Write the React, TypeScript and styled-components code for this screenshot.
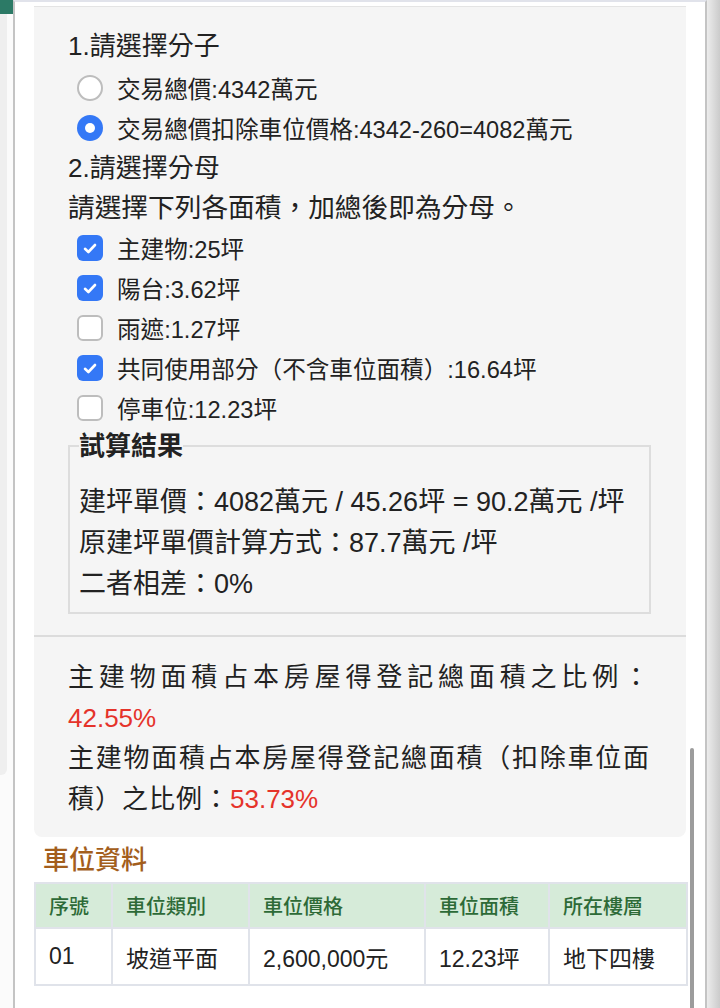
import React from "react";
import styled, { createGlobalStyle } from "styled-components";

const Global = createGlobalStyle`
  html, body { margin: 0; padding: 0; background: #fff; }
  body {
    font-family: "Liberation Sans", "Noto Sans CJK TC", sans-serif;
    color: #222;
  }
  * { box-sizing: border-box; }
`;

const Frame = styled.div`
  display: flex;
  width: 720px;
  height: 1008px;
  overflow: hidden;
  background: #fff;
`;

const LeftGutter = styled.div`
  width: 13px;
  flex: none;
  display: flex;
  flex-direction: column;
  background: #fbfbfb;
`;

const GreenTab = styled.div`
  height: 14px;
  background: #2c7a66;
`;

const GutterCard = styled.div`
  width: 7px;
  height: 761px;
  background: #efefef;
  border-bottom-right-radius: 6px;
`;

const RightGutter = styled.div`
  width: 13px;
  flex: none;
  background: linear-gradient(to right, #ececec, #cbcbcb);
`;

const Modal = styled.div`
  position: relative;
  flex: 1;
  min-width: 0;
  background: #fff;
  border-left: 2px solid #c4c4c4;
  border-right: 2px solid #c4c4c4;
  border-top: 2px solid #e1e3eb;
  padding: 4px 19px 0 19px;
`;

const Scrollbar = styled.div`
  position: absolute;
  right: 11px;
  top: 746px;
  width: 4px;
  height: 262px;
  border-radius: 2px;
  background: #9c9c9c;
`;

const Panel = styled.div`
  background: #f5f5f5;
  border-top: 1px solid #e4e4e4;
  border-radius: 0 0 8px 8px;
`;

const FormSection = styled.div`
  padding: 19px 35px 21px 34px;
  border-bottom: 2px solid #dcdcdc;
`;

const Heading = styled.div`
  font-size: 26px;
  line-height: 40px;
`;

const Instruction = styled.div`
  font-size: 26.7px;
  line-height: 40px;
`;

const OptionRow = styled.label<{ $first?: boolean }>`
  display: flex;
  align-items: center;
  height: 40px;
  margin-top: ${(p) => (p.$first ? "2px" : "0")};
  padding-left: 9px;
  font-size: 23.6px;
  gap: 14px;
`;

const RadioMark = styled.span<{ $on: boolean }>`
  width: 26px;
  height: 26px;
  flex: none;
  border-radius: 50%;
  background: ${(p) => (p.$on ? "#3478f6" : "#fff")};
  border: ${(p) => (p.$on ? "none" : "2px solid #bdbdbd")};
  display: flex;
  align-items: center;
  justify-content: center;
  &::after {
    content: "";
    display: ${(p) => (p.$on ? "block" : "none")};
    width: 10px;
    height: 10px;
    border-radius: 50%;
    background: #fff;
  }
`;

const CheckMark = styled.span<{ $on: boolean }>`
  width: 26px;
  height: 26px;
  flex: none;
  border-radius: 6px;
  background: ${(p) => (p.$on ? "#3478f6" : "#fff")};
  border: ${(p) => (p.$on ? "none" : "2px solid #bdbdbd")};
  display: flex;
  align-items: center;
  justify-content: center;
`;

const Result = styled.fieldset`
  margin: 0;
  padding: 18px 9px 7px 9px;
  border: 2px solid #dddddd;
  min-width: 0;
`;

const Legend = styled.legend`
  padding: 0;
  font-size: 26px;
  font-weight: 700;
  line-height: 36px;
`;

const ResultLine = styled.div`
  font-size: 27px;
  line-height: 41px;
  white-space: nowrap;
`;

const RatioSection = styled.div`
  padding: 20px 36px 18px 34px;
  font-size: 26px;
  line-height: 40.5px;
  letter-spacing: 1px;
  text-align: justify;
`;

const Red = styled.span`
  color: #e5332a;
  letter-spacing: 0;
`;

const SectionTitle = styled.div`
  margin-top: 6px;
  padding-left: 9px;
  font-size: 26px;
  line-height: 34px;
  color: #a35e1c;
  font-weight: 500;
`;

const Table = styled.table`
  width: 100%;
  margin-top: 5px;
  border-collapse: collapse;
  table-layout: fixed;
`;

const Th = styled.th`
  height: 45px;
  padding: 0 0 0 13px;
  text-align: left;
  font-weight: 500;
  font-size: 20px;
  color: #2d6a37;
  background: #d6ebd9;
  border: 2px solid #e0e3ea;
`;

const Td = styled.td`
  height: 57px;
  padding: 0 0 0 13px;
  font-size: 23px;
  color: #222;
  background: #fff;
  border: 2px solid #e0e3ea;
`;

const Check = () => (
  <svg width="14" height="11" viewBox="0 0 14 11">
    <polyline
      points="2,5.8 5.4,9 12,2"
      fill="none"
      stroke="#fff"
      strokeWidth="2.6"
      strokeLinecap="round"
      strokeLinejoin="round"
    />
  </svg>
);

const areas = [
  { label: "主建物:25坪", on: true },
  { label: "陽台:3.62坪", on: true },
  { label: "雨遮:1.27坪", on: false },
  { label: "共同使用部分（不含車位面積）:16.64坪", on: true },
  { label: "停車位:12.23坪", on: false },
];

const cols = [
  { w: 77, h: "序號", v: "01" },
  { w: 137, h: "車位類別", v: "坡道平面" },
  { w: 176, h: "車位價格", v: "2,600,000元" },
  { w: 124, h: "車位面積", v: "12.23坪" },
  { w: 138, h: "所在樓層", v: "地下四樓" },
];

export default function App() {
  return (
    <>
      <Global />
      <Frame>
        <LeftGutter>
          <GreenTab />
          <GutterCard />
        </LeftGutter>
        <Modal>
          <Panel>
            <FormSection>
              <Heading>1.請選擇分子</Heading>
              <OptionRow $first>
                <RadioMark $on={false} />
                交易總價:4342萬元
              </OptionRow>
              <OptionRow>
                <RadioMark $on={true} />
                交易總價扣除車位價格:4342-260=4082萬元
              </OptionRow>
              <Heading>2.請選擇分母</Heading>
              <Instruction>請選擇下列各面積，加總後即為分母。</Instruction>
              {areas.map((a) => (
                <OptionRow key={a.label}>
                  <CheckMark $on={a.on}>{a.on && <Check />}</CheckMark>
                  {a.label}
                </OptionRow>
              ))}
              <Result>
                <Legend>試算結果</Legend>
                <ResultLine>建坪單價：4082萬元 / 45.26坪 = 90.2萬元 /坪</ResultLine>
                <ResultLine>原建坪單價計算方式：87.7萬元 /坪</ResultLine>
                <ResultLine>二者相差：0%</ResultLine>
              </Result>
            </FormSection>
            <RatioSection>
              主建物面積占本房屋得登記總面積之比例：<Red>42.55%</Red>
              <br />
              主建物面積占本房屋得登記總面積（扣除車位面積）之比例：<Red>53.73%</Red>
            </RatioSection>
          </Panel>
          <SectionTitle>車位資料</SectionTitle>
          <Table>
            <colgroup>
              {cols.map((c) => (
                <col key={c.h} style={{ width: c.w }} />
              ))}
            </colgroup>
            <thead>
              <tr>
                {cols.map((c) => (
                  <Th key={c.h}>{c.h}</Th>
                ))}
              </tr>
            </thead>
            <tbody>
              <tr>
                {cols.map((c) => (
                  <Td key={c.h}>{c.v}</Td>
                ))}
              </tr>
            </tbody>
          </Table>
          <Scrollbar />
        </Modal>
        <RightGutter />
      </Frame>
    </>
  );
}
